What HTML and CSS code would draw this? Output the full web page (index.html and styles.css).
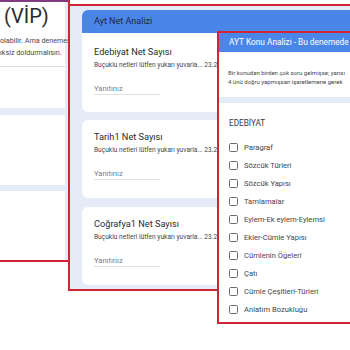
FILE: index.html
```html
<!DOCTYPE html>
<html lang="tr">
<head>
    <meta charset="UTF-8">
    <meta name="viewport" content="width=device-width, initial-scale=1.0">
    <title>AYT Analiz Formları</title>
    <link rel="stylesheet" href="styles.css">
</head>
<body>

    <!-- sol: form başlığı -->
    <div class="shot shot-intro">
        <div class="theme-strip"></div>
        <div class="sheet sheet-head">
            <div class="head-top">
                <div class="big-title">(VİP)</div>
                <p class="intro-text">olabilir. Ama denemen<br>ıksiz doldurmalısın.</p>
            </div>
        </div>
        <div class="sheet sheet-mid"></div>
        <div class="sheet sheet-low"></div>
    </div>

    <!-- orta: net analizi -->
    <div class="shot shot-net">
        <div class="net-card first">
            <div class="net-banner">Ayt Net Analizi</div>
            <div class="net-body">
                <div class="q-title">Edebiyat Net Sayısı</div>
                <div class="q-desc">Buçuklu netleri lütfen yukarı yuvarla... 23.25 ise 23.5</div>
                <div class="q-answer">Yanıtınız</div>
            </div>
        </div>
        <div class="net-card">
            <div class="net-body">
                <div class="q-title">Tarih1 Net Sayısı</div>
                <div class="q-desc">Buçuklu netleri lütfen yukarı yuvarla... 23.25 ise 23.5</div>
                <div class="q-answer">Yanıtınız</div>
            </div>
        </div>
        <div class="net-card">
            <div class="net-body">
                <div class="q-title">Coğrafya1 Net Sayısı</div>
                <div class="q-desc">Buçuklu netleri lütfen yukarı yuvarla... 23.25 ise 23.5</div>
                <div class="q-answer">Yanıtınız</div>
            </div>
        </div>
    </div>

    <!-- sağ: konu analizi -->
    <div class="shot shot-topic">
        <div class="topic-banner">AYT Konu Analizi - Bu denemede</div>
        <div class="topic-note">
            Bir konudan birden çok soru gelmişse; yarısı<br>
            4 ünü doğru yapmışsan işaretlemene gerek
        </div>
        <div class="topic-gap"></div>
        <div class="topic-list">
            <div class="topic-head">EDEBİYAT</div>
            <label class="topic-row"><span class="box"></span>Paragraf</label>
            <label class="topic-row"><span class="box"></span>Sözcük Türleri</label>
            <label class="topic-row"><span class="box"></span>Sözcük Yapısı</label>
            <label class="topic-row"><span class="box"></span>Tamlamalar</label>
            <label class="topic-row"><span class="box"></span>Eylem-Ek eylem-Eylemsi</label>
            <label class="topic-row"><span class="box"></span>Ekler-Cümle Yapısı</label>
            <label class="topic-row"><span class="box"></span>Cümlenin Öğeleri</label>
            <label class="topic-row"><span class="box"></span>Çatı</label>
            <label class="topic-row"><span class="box"></span>Cümle Çeşitleri-Türleri</label>
            <label class="topic-row"><span class="box"></span>Anlatım Bozukluğu</label>
        </div>
    </div>

</body>
</html>
```

FILE: styles.css
```css
html, body {
    margin: 0;
    height: 100%;
}

body {
    position: relative;
    overflow: hidden;
    background: #ffffff;
    font-family: Roboto, "Noto Sans", "Liberation Sans", sans-serif;
    color: #2a2b2e;
}

/* her ekran görüntüsü kırmızı çerçeveli bir pencere */
.shot {
    position: absolute;
    box-sizing: content-box;
    border: 2px solid #cf2535;
    background: #e5ecf8;
    overflow: hidden;
    white-space: nowrap;
}

/* ---- sol pencere ---- */
.shot-intro {
    left: -2px;
    top: -2px;
    width: 68px;
    height: 260px;
    z-index: 1;
}

.theme-strip {
    height: 2px;
    background: #7e3b7f;
}

.sheet {
    background: #fff;
    margin-right: 3px;
}

.sheet-head {
    height: 106px;
}

.head-top {
    height: 63px;
    border-bottom: 1px solid #dadce0;
    padding-left: 4px;
    padding-top: 1px;
}

.big-title {
    font-size: 20px;
    line-height: 26px;
}

.intro-text {
    margin: 6px 0 0 -4px;
    font-size: 7.2px;
    line-height: 12px;
    color: #45474b;
}

.sheet-mid {
    height: 70px;
    margin-top: 7px;
}

.sheet-low {
    height: 80px;
    margin-top: 6px;
}

/* ---- orta pencere ---- */
.shot-net {
    left: 68px;
    top: 4px;
    width: 268px;
    height: 279px;
    padding-top: 4px;
    padding-left: 12px;
    z-index: 2;
}

.net-card {
    background: #fff;
    border-radius: 6px 0 0 6px;
    height: 78px;
    margin-bottom: 9px;
}

.net-card.first {
    height: 102px;
    margin-bottom: 8px;
}

.net-banner {
    height: 23px;
    line-height: 23px;
    padding-left: 12px;
    background: #4a86e8;
    border-radius: 6px 0 0 0;
    font-size: 9px;
    color: #1c2740;
}

.net-body {
    padding: 12px 0 0 12px;
}

.first .net-body {
    padding-top: 14px;
}

.q-title {
    font-size: 9.2px;
    line-height: 10px;
}

.q-desc {
    margin-top: 4px;
    font-size: 6.6px;
    line-height: 8px;
    color: #45474b;
}

.q-answer {
    width: 66px;
    margin-top: 15px;
    font-size: 7.6px;
    line-height: 10px;
    color: #7a7e83;
    border-bottom: 1px solid #e0e0e0;
}

/* ---- sağ pencere ---- */
.shot-topic {
    left: 217px;
    top: 31px;
    width: 200px;
    height: 289px;
    background: #fff;
    z-index: 3;
}

.topic-banner {
    height: 19px;
    line-height: 19px;
    padding-left: 10px;
    background: #4a86e8;
    font-size: 8.3px;
    color: #fff;
}

.topic-note {
    height: 45px;
    box-sizing: border-box;
    padding: 16px 0 0 9px;
    font-size: 6px;
    line-height: 9px;
    color: #45474b;
}

.topic-gap {
    height: 6px;
    background: #e5ecf8;
}

.topic-list {
    padding: 15px 0 0 10px;
}

.topic-head {
    font-size: 8.2px;
    line-height: 10px;
    margin-bottom: 10px;
    color: #3a3b3e;
}

.topic-row {
    display: flex;
    align-items: center;
    height: 18.1px;
    font-size: 7.6px;
    color: #45474b;
}

.box {
    width: 7px;
    height: 7px;
    border: 1.5px solid #6b6f74;
    border-radius: 1.5px;
    margin-right: 6px;
    flex-shrink: 0;
}
```
